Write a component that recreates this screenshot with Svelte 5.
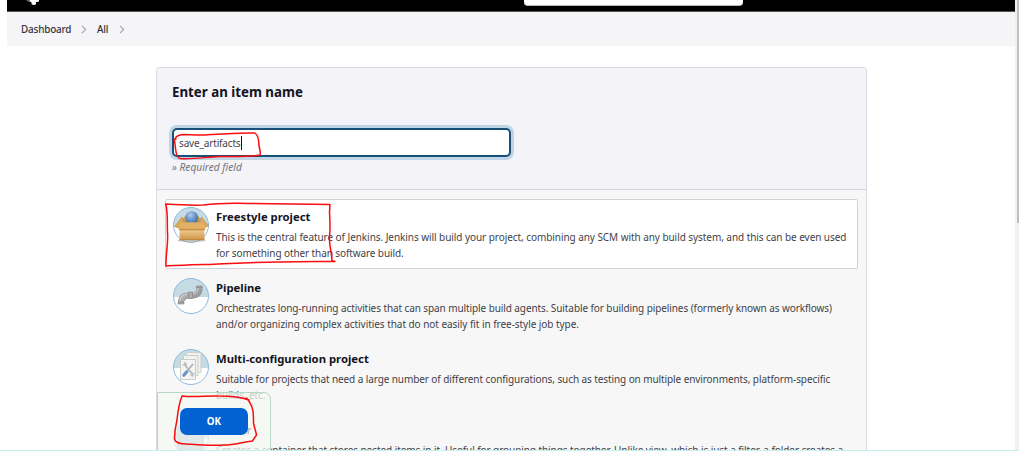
<script>
  const items = [
    {
      icon: 'box',
      title: 'Freestyle project',
      selected: true,
      lines: [
        ['This is the central feature of Jenkins. Jenkins will build your project, combining any SCM with any build system, and this can be even used', -0.062],
        ['for something other than software build.', -0.1]
      ]
    },
    {
      icon: 'pipe',
      title: 'Pipeline',
      lines: [
        ['Orchestrates long-running activities that can span multiple build agents. Suitable for building pipelines (formerly known as workflows)', -0.092],
        ['and/or organizing complex activities that do not easily fit in free-style job type.', -0.05]
      ]
    },
    {
      icon: 'matrix',
      title: 'Multi-configuration project',
      lines: [
        ['Suitable for projects that need a large number of different configurations, such as testing on multiple environments, platform-specific', -0.092],
        ['builds, etc.', -0.1]
      ]
    },
    {
      icon: 'folder',
      title: 'Folder',
      lines: [
        ['Creates a container that stores nested items in it. Useful for grouping things together. Unlike view, which is just a filter, a folder creates a', -0.07]
      ]
    }
  ];
</script>

<div class="window">
  <div class="page">
    <header>
      <svg class="logo" width="18" height="6" viewBox="0 0 18 6">
        <path d="M2 0l3 2 2 0V0z" fill="#567589" />
        <path d="M6 0h9v1.500l-2 .5-1 0v2.200l-1.800.8-2.400-.5-.5-2.500-1.600-.5z" fill="#fff" />
      </svg>
      <div class="search"></div>
    </header>
    <nav>
      <span class="dash">Dashboard</span>
      <svg class="chev" width="6" height="9" viewBox="0 0 6 9"><path d="M1 .8l3.600 3.700L1 8.200" /></svg>
      <span class="all">All</span>
      <svg class="chev" width="6" height="9" viewBox="0 0 6 9"><path d="M1 .8l3.600 3.700L1 8.200" /></svg>
    </nav>
    <main>
      <section class="head">
        <h1>Enter an item name</h1>
        <div class="field"><span>save_artifacts</span><i class="caret"></i></div>
        <p class="hint">» Required field</p>
      </section>
      <ul>
        {#each items as item}
          <li class:selected={item.selected}>
            <svg class="icon" width="36" height="36" viewBox="0 0 36 36">
              <defs>
                <clipPath id="disc"><circle cx="18" cy="18" r="17.500" /></clipPath>
                <linearGradient id="gold" x1="0" y1="0" x2="0" y2="1"><stop offset="0" stop-color="#e3b267" /><stop offset=".4" stop-color="#d09a4b" /><stop offset=".5" stop-color="#eac388" /><stop offset="1" stop-color="#cf9546" /></linearGradient>
                <radialGradient id="ball" cx=".4" cy=".3" r=".7"><stop offset="0" stop-color="#b5cdec" /><stop offset=".5" stop-color="#6d98cd" /><stop offset="1" stop-color="#416fad" /></radialGradient>
                <linearGradient id="metal" x1="0" y1="0" x2="1" y2="1"><stop offset="0" stop-color="#c6c6c6" /><stop offset=".5" stop-color="#a8a8a8" /><stop offset="1" stop-color="#8c8c8c" /></linearGradient>
              </defs>
              <g clip-path="url(#disc)">
                <rect width="36" height="36" fill="#fff" />
                <rect width="36" height="19" fill="#c5dbe3" />
              </g>
              <circle cx="18" cy="18" r="17.500" fill="none" stroke="#8fb9df" />
              {#if item.icon === 'box'}
                <ellipse cx="18.500" cy="33.500" rx="14" ry="1.500" fill="#8d8d86" opacity=".5" />
                <path d="M7 16l4-5h15l5 5z" fill="#a97432" />
                <path d="M12 8.500l-2 5.500 3 2V9zM25.500 8.500l2 5.500-3 2V9z" fill="#cf9c50" />
                <circle cx="18.700" cy="10.700" r="6.500" fill="url(#ball)" />
                <path d="M6.500 15.500h25v17.500h-25z" fill="url(#gold)" />
                <path d="M6.500 32.700h25" stroke="#b98238" stroke-width=".8" />
                <path d="M9 10L1.500 19.500l4 1.500L11 15zM28.500 10l7 9-4 1.500-5-5.500z" fill="#dba95a" stroke="#b9833d" stroke-width=".5" />
                <path d="M7.500 15.500h23l2 6.500h-27z" fill="#e2b066" />
                <path d="M5.500 22.300h27" stroke="#c28a3f" stroke-width=".7" />
              {:else if item.icon === 'pipe'}
                <path d="M8 25c0-5 2.500-7.600 8-7.600h3c5 0 7.500-2.200 7.500-8.400" fill="none" stroke="#858585" stroke-width="6" />
                <path d="M8 25c0-5 2.500-7.600 8-7.600h3c5 0 7.500-2.200 7.500-8.400" fill="none" stroke="url(#metal)" stroke-width="5" />
                <path d="M7 22.500c.5-4 3-6 7-6.300M20 15.700c3.200-.7 4.800-2.500 5.100-5.700" fill="none" stroke="#ccc" stroke-width="1.200" />
                <path d="M5 24.500h6v1.500H5zM23.500 8h5.500v1.500h-5.500zM15.700 14h3.800v6.500h-3.800z" fill="#adadad" stroke="#808080" stroke-width=".6" />
              {:else if item.icon === 'matrix'}
                <path d="M13.500 3.500h14.500v20H13.500z" fill="#f1f1ee" stroke="#c7c9c8" stroke-width=".8" />
                <path d="M10.500 6.500h14.500v20H10.500z" fill="#f1f1ee" stroke="#c7c9c8" stroke-width=".8" />
                <path d="M7.500 10.500h15v20h-15z" fill="#f4f4f2" stroke="#bfc2c1" stroke-width=".8" />
                <path d="M11 15l8.500 10" stroke="#b5babd" stroke-width="1.800" />
                <path d="M9.500 15.500l1.500.7 1-1-.5-1.500c1.500 0 2.200 1.300 1.700 2.600M18 24.500c-.5 1.500.5 2.700 2 2.500l-.5-1.400 1-1 1.300.5" fill="none" stroke="#b3babd" stroke-width="1.100" />
                <path d="M20 15l-5 6" stroke="#a3adb4" stroke-width="1.400" />
                <path d="M14 22.500l-3.200 3.800" stroke="#6594ca" stroke-width="3" stroke-linecap="round" />
              {:else}
                <path d="M4 6h27v30H4z" fill="#9fb2c9" />
              {/if}
            </svg>
            <div class="copy">
              <h2>{item.title}</h2>
              {#each item.lines as [line, tracking]}<p style:letter-spacing="{tracking}px">{line}</p>{/each}
            </div>
          </li>
        {/each}
      </ul>
    </main>
  </div>
  <aside><i class="thumb"></i></aside>
  <div class="footer"><button>OK</button></div>
  <svg class="ink" width="1036" height="456" viewBox="0 0 1036 456">
    <path d="M175 139c1-3 3-4 8-4.500 7 0 14 1 22 .5 15-1 32-2.500 50-2 3 2 4 8 4 13 1 4 2 7 1 9-10 2-26 1.500-41 1.500-14 .5-25 3-39 2-3-1-4-5-4.500-10l-1-8c-.3-1 .5-1.500 1.500-1.500" />
    <path d="M165.500 204c12 .8 25 1.500 38 1 14-2 23-2 36-1.800 32 .8 60 .6 90.500 1.200l-.5 8c.5 9 1 16 0 24-.5 9 2 15 2.500 24M166 205c2 9 1 17 1.500 28 1 10-2 22-1.500 33 15-.8 31-2 44-1.500 24-1 48-2.700 71-2.500 19-.8 34-.6 54-.5l-3-1-.5-8" />
    <path d="M249 400c-8-3-19-4-30-4-12-.5-24 1.500-37 0-2 5-4 14-5 24-2 8-2.500 13-2.500 19 1 4 5 5 12 5 14 1 24 2 37 1 12 0 18-3 29-4l4-6c-1-5-2-7-3-12 0-9 0-15-4-21l-3-4" />
  </svg>
</div>

<style>
  :global(body) { margin: 0; background: #fff; }
  * { box-sizing: border-box; }
  .window { position: relative; width: 1019px; height: 451px; padding-left: 7px; display: flex; overflow: hidden; font-family: "Noto Sans", sans-serif; color: #14141f; }
  .window::after { content: ""; position: absolute; left: 0; right: 0; bottom: 0; height: 1px; background: #c4f0ed; }
  .page { flex: none; width: 1008px; height: 450px; overflow: hidden; }
  header { height: 12px; background: #000; border-bottom: 1px solid #55555a; display: flex; }
  .logo { margin-left: 17px; }
  .search { width: 219px; height: 6px; margin-left: 482px; background: #fff; border-bottom: 1px solid #bbb; border-radius: 0 0 4px 4px; }
  nav { height: 34px; background: #f5f5f8; display: flex; align-items: center; padding-left: 14px; font-size: 9.900px; letter-spacing: -.17px; font-weight: 500; color: #333340; }
  .dash { width: 60px; }
  .all { width: 22px; margin-left: 10px; }
  .chev path { fill: none; stroke: #a5a5ae; stroke-width: 1.200; }
  main { width: 711px; height: 420px; margin: 21px 0 0 149px; border: 1px solid #d9dce3; border-radius: 3px; background: #f7f7f7; overflow: hidden; }
  .head { height: 122px; background: #f3f3f8; border-bottom: 1px solid #d5d9df; padding: 15px 15px 0; }
  h1 { margin: 0; font-size: 13.300px; line-height: 18px; font-weight: 700; white-space: nowrap; }
  .field { width: 339px; height: 29px; margin-top: 27px; border: 2px solid #174f78; border-radius: 5px; box-shadow: 0 0 0 3px #bfd5e5; background: #fff; display: flex; align-items: center; padding-left: 5px; font-size: 10px; letter-spacing: -.16px; color: #44444c; }
  .caret { width: 1px; height: 14px; background: #111; }
  .hint { margin: 3px 0 0; font-size: 10.200px; line-height: 14px; font-style: italic; color: #757579; white-space: nowrap; }
  ul { list-style: none; margin: 0; padding: 9px 8px; }
  li { height: 70px; margin-bottom: 1px; border: 1px solid transparent; border-radius: 2px; padding: 7px 0 0 7px; display: flex; white-space: nowrap; }
  li.selected { background: #fff; border-color: #cdd3da; }
  .icon { flex: none; width: 36px; height: 36px; }
  .copy { padding-left: 7px; }
  h2 { margin: 1px 0 3px; font-size: 11.300px; line-height: 18px; font-weight: 700; }
  p { margin: 0; font-size: 10px; line-height: 16px; color: #3f3f48; }
  aside { flex: none; width: 4px; background: #f0f0f0; }
  .thumb { display: block; width: 2px; height: 223px; margin-left: 2px; background: #bfbfbf; }
  .footer { position: absolute; left: 157px; top: 392px; width: 114px; height: 60px; border: 1px solid #b5d8c3; border-radius: 0 7px 0 0; background: rgba(245, 250, 241, .75); padding: 15px 0 0 22px; }
  button { display: block; width: 68px; height: 27px; padding: 0; border: 0; border-radius: 7px; background: #0262d2; color: #fff; font: 700 9.800px "Noto Sans", sans-serif; }
  .ink { position: absolute; left: 0; top: 0; pointer-events: none; }
  .ink path { fill: none; stroke: #fa0c10; stroke-width: 1.500; stroke-linecap: round; stroke-linejoin: round; }
</style>
